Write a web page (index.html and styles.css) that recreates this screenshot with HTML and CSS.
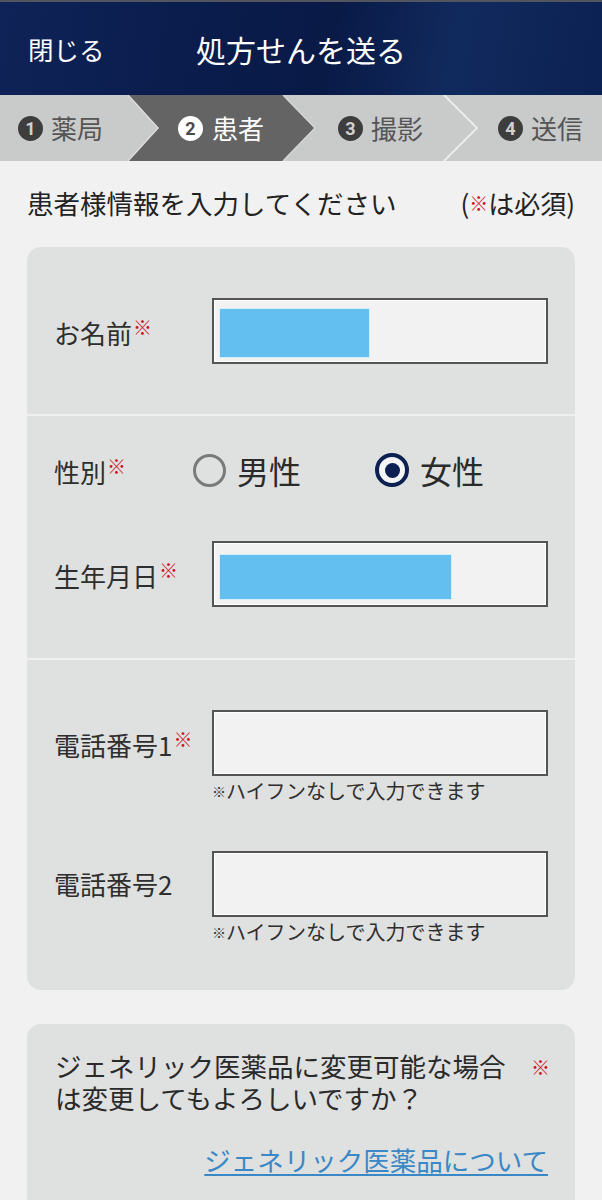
FILE: index.html
```html
<!DOCTYPE html>
<html lang="ja">
<head>
<meta charset="utf-8">
<title>処方せんを送る</title>
<link rel="stylesheet" href="styles.css">
</head>
<body>
<div class="page">
  <header class="topbar">
    <span class="close">閉じる</span>
    <span class="title">処方せんを送る</span>
  </header>

  <nav class="steps">
    <svg class="steps-bg" viewBox="0 0 602 66" preserveAspectRatio="none" aria-hidden="true">
      <polygon points="128,0 283,0 315,33 283,66 128,66 158,33" fill="#646464"/>
      <polyline points="128,0 158,33 128,66" fill="none" stroke="#dcdcdc" stroke-width="1.5"/>
      <polyline points="283,0 315,33 283,66" fill="none" stroke="#d6d6d6" stroke-width="1.5"/>
      <polyline points="444,0 477,33 444,66" fill="none" stroke="#ececec" stroke-width="2"/>
    </svg>
    <div class="step"><span class="num">1</span><span class="lbl">薬局</span></div>
    <div class="step active"><span class="num">2</span><span class="lbl">患者</span></div>
    <div class="step"><span class="num">3</span><span class="lbl">撮影</span></div>
    <div class="step"><span class="num">4</span><span class="lbl">送信</span></div>
  </nav>

  <div class="intro">
    <span>患者様情報を入力してください</span>
    <span class="req-note">(<span class="req-mark">※</span>は必須)</span>
  </div>

  <section class="card">
    <div class="block block-name">
      <div class="field">
        <span class="label">お名前<span class="req">※</span></span>
        <div class="input"><span class="mask mask-name"></span></div>
      </div>
    </div>

    <div class="block block-person">
      <div class="gender">
        <span class="label gender-label">性別<span class="req">※</span></span>
        <div class="radios">
          <span class="radio-opt"><span class="radio"></span><span class="radio-txt">男性</span></span>
          <span class="radio-opt"><span class="radio checked"><span class="dot"></span></span><span class="radio-txt">女性</span></span>
        </div>
      </div>
      <div class="field dob">
        <span class="label">生年月日<span class="req">※</span></span>
        <div class="input"><span class="mask mask-dob"></span></div>
      </div>
    </div>

    <div class="block block-phone">
      <div class="field">
        <span class="label">電話番号1<span class="req">※</span></span>
        <div class="input"></div>
        <span class="hint"><span class="hint-mark">※</span>ハイフンなしで入力できます</span>
      </div>
      <div class="field phone2">
        <span class="label">電話番号2</span>
        <div class="input"></div>
        <span class="hint"><span class="hint-mark">※</span>ハイフンなしで入力できます</span>
      </div>
    </div>
  </section>

  <section class="card card-generic">
    <div class="question">
      <div class="q-text">
        <div class="q-line">ジェネリック医薬品に変更可能な場合</div>
        <div class="q-line">は変更してもよろしいですか？</div>
      </div>
      <span class="req q-req">※</span>
    </div>
    <div class="link-row"><a class="link" href="#">ジェネリック医薬品について</a></div>
  </section>
</div>
</body>
</html>
```

FILE: styles.css
```css
* { box-sizing: border-box; }

body {
  margin: 0;
  background: #f1f1f1;
  font-family: "Noto Sans CJK JP", "Noto Sans", sans-serif;
  color: #2a2a2a;
}

.page {
  width: 602px;
  padding-bottom: 60px;
}

/* header */
.topbar {
  height: 95px;
  border-top: 2px solid #50555f;
  background: linear-gradient(100deg, #0f2358 0%, #0a1c4b 35%, #091a47 55%, #112a5d 75%, #0c2153 100%);
  display: flex;
  align-items: center;
  padding-left: 28px;
  color: #ffffff;
}

.close {
  width: 168px;
  font-size: 25.5px;
  line-height: 1;
}

.title {
  font-size: 30px;
  line-height: 1;
}

/* steps */
.steps {
  position: relative;
  height: 66px;
  background: #c9caca;
  display: grid;
  grid-template-columns: 160px 160px 160px 1fr;
}

.steps-bg {
  position: absolute;
  left: 0;
  top: 0;
  width: 100%;
  height: 100%;
}

.step {
  position: relative;
  display: flex;
  align-items: center;
  gap: 8px;
  padding-left: 18px;
  color: #555555;
}

.num {
  width: 25px;
  height: 25px;
  border-radius: 50%;
  background: #3d3d3d;
  color: #d0d0d0;
  font-family: Roboto, "Liberation Sans", sans-serif;
  font-weight: 700;
  font-size: 18px;
  display: flex;
  align-items: center;
  justify-content: center;
}

.lbl {
  font-size: 26px;
  line-height: 1;
}

.step.active { color: #ffffff; gap: 9px; }
.step.active .num { background: #ffffff; color: #4a4a4a; }

/* intro */
.intro {
  display: flex;
  justify-content: space-between;
  padding: 24px 27px 0;
  font-size: 26.5px;
  line-height: 36px;
  color: #222222;
}

.req-note { font-size: 26px; }
.req-mark {
  color: #d0101e;
  font-size: 19px;
  font-weight: 700;
  vertical-align: 3px;
}

/* card */
.card {
  margin: 26px 27px 0;
  background: #dfe0e0;
  border-radius: 14px;
}

.block {
  padding: 0 27px;
}

.block + .block {
  border-top: 2px solid #efefef;
}

.block-name { padding-top: 51px; padding-bottom: 50px; }
.block-person { padding-top: 35px; padding-bottom: 51px; }
.block-phone { padding-top: 50px; padding-bottom: 45px; }

.field {
  display: grid;
  grid-template-columns: 158px 1fr;
  align-items: center;
}

.label {
  font-size: 26px;
  line-height: 1;
  color: #2e2e2e;
  white-space: nowrap;
}

.req {
  color: #d0101e;
  font-size: 19px;
  font-weight: 700;
  vertical-align: 9px;
  margin-left: 1px;
}

.input {
  height: 66px;
  border: 2px solid #545454;
  background: #f2f2f2;
  display: flex;
  align-items: center;
  padding-left: 6px;
  box-shadow: inset 0 0 0 1px #ffffff;
}

.mask {
  display: block;
  background: #62bff0;
  box-shadow: 0 0 0 1px #d6eef9;
}

.mask-name { width: 149px; height: 48px; margin-top: 4px; }
.mask-dob { width: 231px; height: 44px; margin-top: 6px; }

.hint {
  grid-column: 2;
  margin-top: 2px;
  font-size: 20px;
  line-height: 26px;
  color: #2e2e2e;
  white-space: nowrap;
}

.hint-mark {
  font-size: 14px;
  vertical-align: 2px;
}

.phone2 { margin-top: 47px; }

/* gender */
.gender {
  height: 38px;
  display: flex;
  align-items: center;
}

.gender-label { width: 139px; }

.radios {
  display: flex;
  align-items: center;
  gap: 74px;
}

.radio-opt {
  display: flex;
  align-items: center;
  gap: 11px;
}

.radio {
  width: 33px;
  height: 33px;
  border-radius: 50%;
  border: 3px solid #7a7a7a;
  display: flex;
  align-items: center;
  justify-content: center;
}

.radio.checked {
  width: 34px;
  height: 34px;
  border: 4px solid #0c2152;
  background: #f4f4f4;
}

.dot {
  width: 15px;
  height: 15px;
  border-radius: 50%;
  background: #0c2152;
}

.radio-txt {
  font-size: 32px;
  line-height: 1;
  color: #2a2a2a;
}

.dob { margin-top: 52px; }

/* generic card */
.card-generic {
  margin-top: 34px;
  padding: 26px 25px 40px 28px;
}

.question {
  display: flex;
  justify-content: space-between;
  align-items: flex-start;
  color: #2a2a2a;
}

.q-text {
  display: flex;
  flex-direction: column;
  gap: 0;
}

.q-line {
  font-size: 26.5px;
  line-height: 32px;
  height: 32px;
  white-space: nowrap;
}

.q-req {
  font-size: 19px;
  vertical-align: 0;
  line-height: 33px;
}

.link-row {
  margin-top: 29px;
  display: flex;
  justify-content: flex-end;
  padding-right: 2px;
}

.link {
  font-size: 26.5px;
  line-height: 34px;
  color: #3a88c6;
  text-decoration: underline;
  text-underline-offset: 3px;
}
```
